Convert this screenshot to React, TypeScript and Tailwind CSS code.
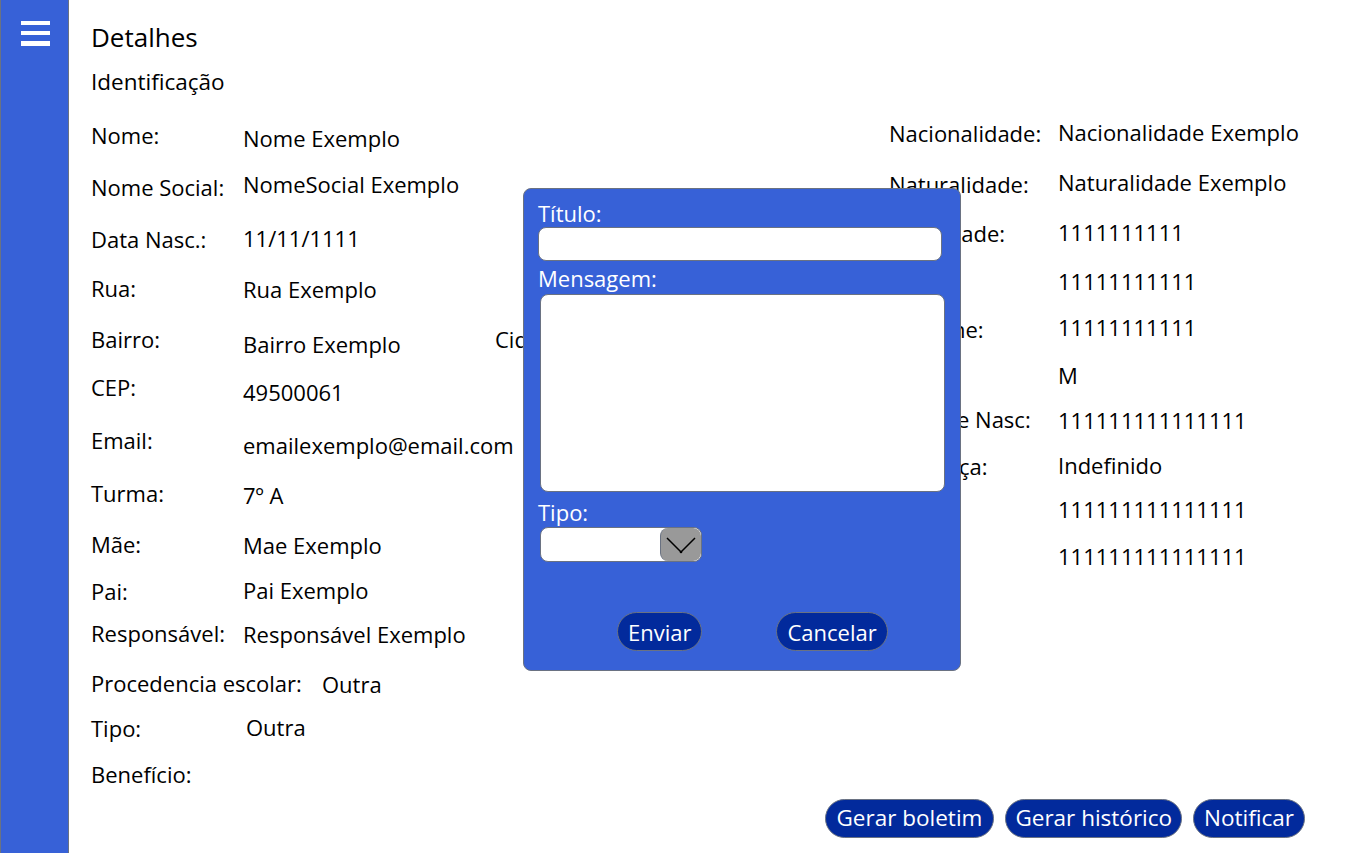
import React from 'react';

type Row = {
  label: string;
  value?: string;
  h: string;
  lt: string;
  vt: string;
  lw?: string;
  extra?: string;
};

const leftRows: Row[] = [
  { label: 'Nome:', value: 'Nome Exemplo', h: 'h-[49px]', lt: 'mt-0', vt: 'mt-[3px]' },
  { label: 'Nome Social:', value: 'NomeSocial Exemplo', h: 'h-[54px]', lt: 'mt-[3px]', vt: 'mt-0' },
  { label: 'Data Nasc.:', value: '11/11/1111', h: 'h-[50px]', lt: 'mt-[1px]', vt: 'mt-0' },
  { label: 'Rua:', value: 'Rua Exemplo', h: 'h-[51px]', lt: 'mt-0', vt: 'mt-[1px]' },
  { label: 'Bairro:', value: 'Bairro Exemplo', h: 'h-[48px]', lt: 'mt-0', vt: 'mt-[5px]', extra: 'Cidade:' },
  { label: 'CEP:', value: '49500061', h: 'h-[53px]', lt: 'mt-0', vt: 'mt-[5px]' },
  { label: 'Email:', value: 'emailexemplo@email.com', h: 'h-[53px]', lt: 'mt-0', vt: 'mt-[5px]' },
  { label: 'Turma:', value: '7º A', h: 'h-[51px]', lt: 'mt-0', vt: 'mt-[2px]' },
  { label: 'Mãe:', value: 'Mae Exemplo', h: 'h-[46px]', lt: 'mt-0', vt: 'mt-[1px]' },
  { label: 'Pai:', value: 'Pai Exemplo', h: 'h-[43px]', lt: 'mt-[1px]', vt: 'mt-0' },
  { label: 'Responsável:', value: 'Responsável Exemplo', h: 'h-[50px]', lt: 'mt-0', vt: 'mt-[1px]' },
  { label: 'Procedencia escolar:', value: 'Outra', h: 'h-[44px]', lt: 'mt-0', vt: 'mt-[1px]', lw: 'w-[231px]' },
  { label: 'Tipo:', value: 'Outra', h: 'h-[47px]', lt: 'mt-[1px]', vt: 'mt-0', lw: 'w-[155px]' },
  { label: 'Benefício:', h: 'h-[30px]', lt: 'mt-0', vt: 'mt-0' },
];

const rightRows: Row[] = [
  { label: 'Nacionalidade:', value: 'Nacionalidade Exemplo', h: 'h-[50px]', lt: 'mt-[1px]', vt: 'mt-0' },
  { label: 'Naturalidade:', value: 'Naturalidade Exemplo', h: 'h-[50px]', lt: 'mt-[2px]', vt: 'mt-0' },
  { label: 'Identidade:', value: '1111111111', h: 'h-[49px]', lt: 'mt-[1px]', vt: 'mt-0' },
  { label: 'CPF:', value: '11111111111', h: 'h-[46px]', lt: 'mt-[1px]', vt: 'mt-0' },
  { label: 'Telefone:', value: '11111111111', h: 'h-[48px]', lt: 'mt-[2px]', vt: 'mt-0' },
  { label: 'Sexo:', value: 'M', h: 'h-[44px]', lt: 'mt-0', vt: 'mt-0' },
  { label: 'Cert. de Nasc:', value: '111111111111111', h: 'h-[46px]', lt: 'mt-0', vt: 'mt-[1px]' },
  { label: 'Cor/Raça:', value: 'Indefinido', h: 'h-[44px]', lt: 'mt-[1px]', vt: 'mt-0' },
  { label: 'NIS:', value: '111111111111111', h: 'h-[47px]', lt: 'mt-0', vt: 'mt-0' },
  { label: 'SUS:', value: '111111111111111', h: 'h-[30px]', lt: 'mt-0', vt: 'mt-0' },
];

function FieldRow({ row, labelWidth }: { row: Row; labelWidth: string }) {
  return (
    <div className={`flex items-start ${row.h}`}>
      <span className={`${row.lw ?? labelWidth} shrink-0 whitespace-nowrap ${row.lt}`}>{row.label}</span>
      {row.extra ? (
        <>
          <span className={`w-[252px] shrink-0 whitespace-nowrap ${row.vt}`}>{row.value}</span>
          <span className={`whitespace-nowrap ${row.lt}`}>{row.extra}</span>
          <span className="ml-[30px] whitespace-nowrap">Cidade Exemplo</span>
        </>
      ) : (
        <span className={`whitespace-nowrap ${row.vt}`}>{row.value}</span>
      )}
    </div>
  );
}

function ModalNotificar() {
  return (
    <div className="absolute left-[523px] top-[188px] w-[438px] h-[483px] bg-[#3761d7] border border-gray-500 rounded-lg pl-[14px] pt-[11px] text-white text-[22px] leading-[26px] flex flex-col">
      <span>Título:</span>
      <input className="mt-[1px] w-[404px] h-[34px] bg-white rounded-lg border border-gray-500 outline-none text-black px-2" />
      <span className="mt-[4px]">Mensagem:</span>
      <textarea className="mt-[3px] ml-[2px] w-[405px] h-[198px] bg-white rounded-lg border border-gray-500 outline-none resize-none text-black p-2" />
      <span className="mt-[7px]">Tipo:</span>
      <div className="mt-[2px] ml-[2px] w-[162px] h-[35px] bg-white rounded-lg border border-gray-500 flex justify-end overflow-hidden">
        <div className="w-[41px] h-full bg-[#999999] rounded-lg border-l border-gray-500 flex items-center justify-center">
          <svg width="30" height="18" viewBox="0 0 30 18" fill="none">
            <path d="M1 2 L15 16 L29 2" stroke="#000" strokeWidth="1.5" />
            <circle cx="15" cy="16" r="1.3" fill="#000" />
          </svg>
        </div>
      </div>
      <div className="mt-[50px] flex">
        <button className="ml-[79px] h-[39px] px-[10px] rounded-full bg-[#022a9c] border border-gray-500 leading-none">
          Enviar
        </button>
        <button className="ml-[74px] h-[39px] px-[10px] rounded-full bg-[#022a9c] border border-gray-500 leading-none">
          Cancelar
        </button>
      </div>
    </div>
  );
}

export default function App() {
  return (
    <div
      className="relative flex h-[853px] w-[1366px] overflow-hidden bg-white text-black"
      style={{ fontFamily: '"Open Sans", "Noto Sans", sans-serif' }}
    >
      {/* Sidebar */}
      <aside className="w-[69px] shrink-0 h-full bg-[#3761d7] border-l border-r border-gray-500 pl-[20px] pt-[21px]">
        <div className="flex flex-col gap-[6px] w-[29px]">
          <div className="h-[4px] bg-white" />
          <div className="h-[4px] bg-white" />
          <div className="h-[5px] bg-white" />
        </div>
      </aside>

      {/* Conteúdo */}
      <main className="flex-1 flex flex-col pl-[22px] pr-[61px] pt-[21px] text-[22px] leading-[30px]">
        <h1 className="text-[26px] leading-[32px]">Detalhes</h1>
        <h2 className="mt-[14px] text-[22.5px] leading-[30px]">Identificação</h2>

        <div className="mt-[20px] flex items-start">
          <div className="w-[798px] shrink-0 pt-[3px] flex flex-col">
            {leftRows.map((r) => (
              <FieldRow key={r.label} row={r} labelWidth="w-[152px]" />
            ))}
          </div>
          <div className="flex flex-col">
            {rightRows.map((r) => (
              <FieldRow key={r.label} row={r} labelWidth="w-[169px]" />
            ))}
          </div>
        </div>

        <div className="mt-[10px] flex justify-end gap-[11px] text-white text-[22.5px]">
          <button className="h-[39px] px-[11px] rounded-full bg-[#022a9c] border border-gray-500 leading-none">
            Gerar boletim
          </button>
          <button className="h-[39px] px-[9px] rounded-full bg-[#022a9c] border border-gray-500 leading-none">
            Gerar histórico
          </button>
          <button className="h-[39px] px-[10px] rounded-full bg-[#022a9c] border border-gray-500 leading-none">
            Notificar
          </button>
        </div>
      </main>

      <ModalNotificar />
    </div>
  );
}
